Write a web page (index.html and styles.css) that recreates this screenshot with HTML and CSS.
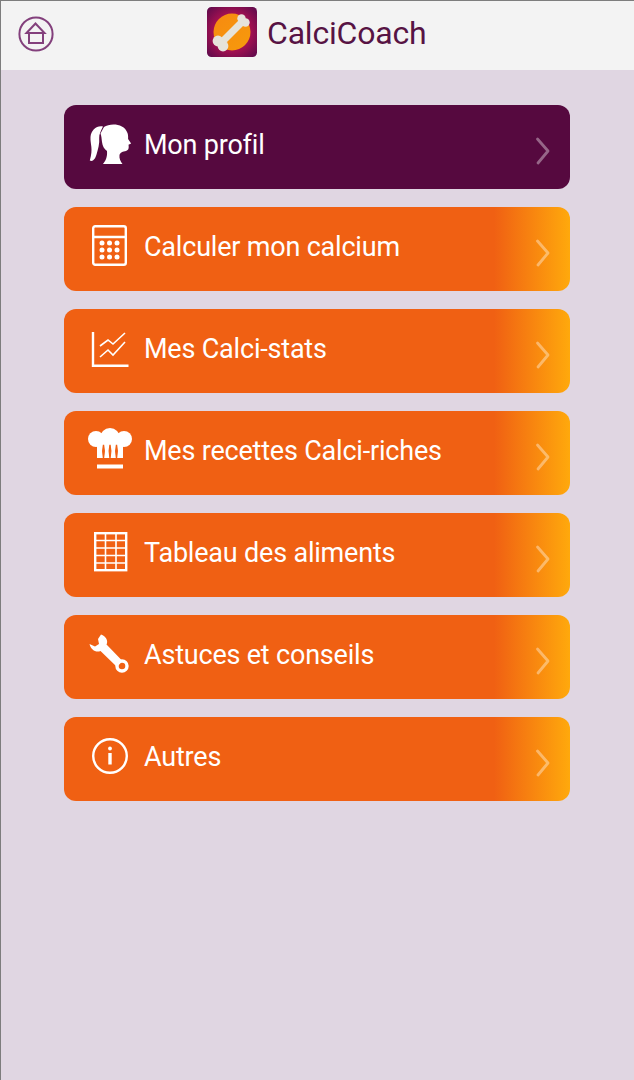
FILE: index.html
```html
<!DOCTYPE html>
<html lang="fr">
<head>
<meta charset="utf-8">
<title>CalciCoach</title>
<link rel="stylesheet" href="styles.css">
</head>
<body>
<div class="screen">
  <header class="topbar">
    <a class="home" href="#" aria-label="Accueil">
      <svg viewBox="0 0 36 36" width="36" height="36"><circle cx="18" cy="18" r="16.600" class="home-line"/><path class="home-line" d="M8.500 17 17.500 7.500 26.500 17ZM11 17v10h14V17"/></svg>
    </a>
    <div class="brand">
      <svg class="logo" viewBox="0 0 50 50" width="50" height="50">
        <defs>
          <radialGradient id="bgGrad" cx=".5" cy=".5" r=".7"><stop offset=".55" stop-color="#a01050"/><stop offset="1" stop-color="#5a0a4c"/></radialGradient>
          <linearGradient id="sun" x1="0" y1="0" x2="1" y2="1"><stop offset="0" stop-color="#f78a10"/><stop offset="1" stop-color="#f79a0c"/></linearGradient>
        </defs>
        <rect width="50" height="50" rx="4.500" fill="url(#bgGrad)"/>
        <circle cx="25" cy="25" r="18.500" fill="url(#sun)"/>
        <path class="bone" d="M14 36 36 14"/>
        <circle class="bone-end" cx="34.500" cy="11.500" r="4.200"/><circle class="bone-end" cx="38.500" cy="15.500" r="4.200"/>
        <circle class="bone-end" cx="11" cy="34" r="5.400"/><circle class="bone-end" cx="16" cy="39" r="5.400"/>
      </svg>
      <h1 class="title">CalciCoach</h1>
    </div>
  </header>
  <nav class="menu">
    <a class="item item-dark" href="#">
      <svg class="icon" viewBox="0 0 44 44"><path class="fill" d="M16 5C22 1 36 1 39.500 11c.7 2 .7 4 .6 6l3 4.500-2.600 1.300c.5 3 .3 5.500-2.500 6.200-3 .5-6 1.500-6.500 4-.5 3.500 1 6.500 3 8.900H15c2.500-3 4.500-7 4-13-3-2-4.500-5-5-9-.4-3-.5-6-1.500-8.500Z"/><path class="fill" d="M15 4.500C9 3 3 8 2.500 15c-.4 8 3 11-.7 23.500 3 1.500 5.500-1.500 6.700-6 1.500-5 3.200-11 2.700-16.500-.2-3.500 1.500-7 3.800-11.500Z"/></svg>
      <span class="label">Mon profil</span>
      <svg class="chev" viewBox="0 0 16 28"><path class="chev-line" d="M3.500 2 14 14 4 26"/></svg>
    </a>
    <a class="item" href="#">
      <svg class="icon" viewBox="0 0 44 44"><rect class="line" x="5.200" y="2.200" width="32.600" height="38.600" rx="2"/><path class="line" d="M5 13h33"/><g class="fill"><circle cx="14" cy="19" r="2.500"/><circle cx="21.500" cy="19" r="2.500"/><circle cx="29" cy="19" r="2.500"/><circle cx="14" cy="26" r="2.500"/><circle cx="21.500" cy="26" r="2.500"/><circle cx="29" cy="26" r="2.500"/><circle cx="14" cy="33" r="2.500"/><circle cx="21.500" cy="33" r="2.500"/><circle cx="29" cy="33" r="2.500"/></g></svg>
      <span class="label">Calculer mon calcium</span>
      <svg class="chev" viewBox="0 0 16 28"><path class="chev-line" d="M3.500 2 14 14 4 26"/></svg>
    </a>
    <a class="item" href="#">
      <svg class="icon" viewBox="0 0 44 44"><path class="line" d="M5 6v33.800h35.500"/><path class="line-thin" d="M12 20l8-6 5 4 12-11M12 31l8-7 5 5 12-13"/></svg>
      <span class="label">Mes Calci-stats</span>
      <svg class="chev" viewBox="0 0 16 28"><path class="chev-line" d="M3.500 2 14 14 4 26"/></svg>
    </a>
    <a class="item" href="#">
      <svg class="icon" viewBox="0 0 44 44"><g class="fill"><circle cx="8" cy="11" r="8"/><circle cx="22" cy="10" r="10"/><circle cx="36" cy="11" r="8"/><rect x="9" y="10" width="26" height="20"/><rect x="9" y="36.500" width="26" height="4"/></g><path class="slot" d="M15.500 30c-1-4-1-9 0-13 1 4 1 9 0 13ZM22 30c-1-4-1-9 0-13 1 4 1 9 0 13ZM28.500 30c-1-4-1-9 0-13 1 4 1 9 0 13Z"/></svg>
      <span class="label">Mes recettes Calci-riches</span>
      <svg class="chev" viewBox="0 0 16 28"><path class="chev-line" d="M3.500 2 14 14 4 26"/></svg>
    </a>
    <a class="item" href="#">
      <svg class="icon" viewBox="0 0 44 44"><rect class="line" x="7.200" y="3.200" width="31" height="37"/><path class="line-thin" d="M7 10.500h31M7 18h31M7 25.500h31M7 33h31M17.500 3v37M28 3v37"/></svg>
      <span class="label">Tableau des aliments</span>
      <svg class="chev" viewBox="0 0 16 28"><path class="chev-line" d="M3.500 2 14 14 4 26"/></svg>
    </a>
    <a class="item" href="#">
      <svg class="icon" viewBox="0 0 44 44"><path class="fill" d="M1.500 12 7 14.500l4-2.500-1-5 3-4.500c5 1.500 7.500 6.500 5.500 10L34.500 29 29 35 12.500 19C8 21 3 18 1.500 12Z"/><circle class="line ring" cx="34" cy="34" r="5"/></svg>
      <span class="label">Astuces et conseils</span>
      <svg class="chev" viewBox="0 0 16 28"><path class="chev-line" d="M3.500 2 14 14 4 26"/></svg>
    </a>
    <a class="item" href="#">
      <svg class="icon" viewBox="0 0 44 44"><circle class="line" cx="22" cy="22" r="16.800"/><circle class="fill" cx="22" cy="14.500" r="1.900"/><rect class="fill" x="20.300" y="19" width="3.400" height="11.500"/></svg>
      <span class="label">Autres</span>
      <svg class="chev" viewBox="0 0 16 28"><path class="chev-line" d="M3.500 2 14 14 4 26"/></svg>
    </a>
  </nav>
</div>
</body>
</html>
```
FILE: styles.css
```css
* { box-sizing: border-box; }
html, body { margin: 0; height: 100%; }
body { font-family: Roboto, "Liberation Sans", sans-serif; background: #e0d6e2; }
.screen {
  height: 1080px;
  display: flex;
  flex-direction: column;
  border-left: 1px solid #7d7d7d;
  border-top: 1px solid #7d7d7d;
  overflow: hidden;
}
.topbar {
  height: 69px;
  flex: none;
  background: #f3f3f3;
  display: flex;
  align-items: flex-start;
  padding: 15px 0 0 17px;
}
.home { display: block; width: 36px; height: 36px; }
.home svg { display: block; }
.home-line { fill: none; stroke: #83407c; stroke-width: 2; }
.brand { display: flex; align-items: flex-start; margin: -9px 0 0 153px; gap: 10px; }
.logo { display: block; flex: none; }
.bone { stroke: #e6e3da; stroke-width: 7; fill: none; }
.bone-end { fill: #e6e3da; }
.title { margin: 1px 0 0; font-size: 32px; letter-spacing: -.2px; font-weight: 400; line-height: 50px; color: #571344; }
.menu {
  display: flex;
  flex-direction: column;
  gap: 18px;
  padding: 35px 0 0 63px;
}
.item {
  width: 506px;
  height: 84px;
  border-radius: 12px;
  display: flex;
  align-items: flex-start;
  padding: 17px 20px 0 24px;
  text-decoration: none;
  color: #fff;
  background: linear-gradient(90deg, #f06013 0, #f06013 85%, #ffa90c 100%);
}
.item-dark { background: #56093f; }
.icon { display: block; flex: none; width: 44px; height: 44px; }
.label { font-size: 27px; letter-spacing: -.2px; line-height: 44px; margin: 1px 0 0 12px; color: #fff; }
.chev { display: block; flex: none; width: 16px; height: 28px; margin: 15px 0 0 auto; }
.chev-line { fill: none; stroke: #fff; stroke-opacity: .38; stroke-width: 2.800; stroke-linecap: round; stroke-linejoin: round; }
.fill { fill: #fff; }
.slot { fill: #f06013; stroke: #f06013; stroke-width: 1.400; }
.line { fill: none; stroke: #fff; stroke-width: 2.400; }
.ring { stroke-width: 3.400; }
.line-thin { fill: none; stroke: #fff; stroke-width: 1.600; }
```
